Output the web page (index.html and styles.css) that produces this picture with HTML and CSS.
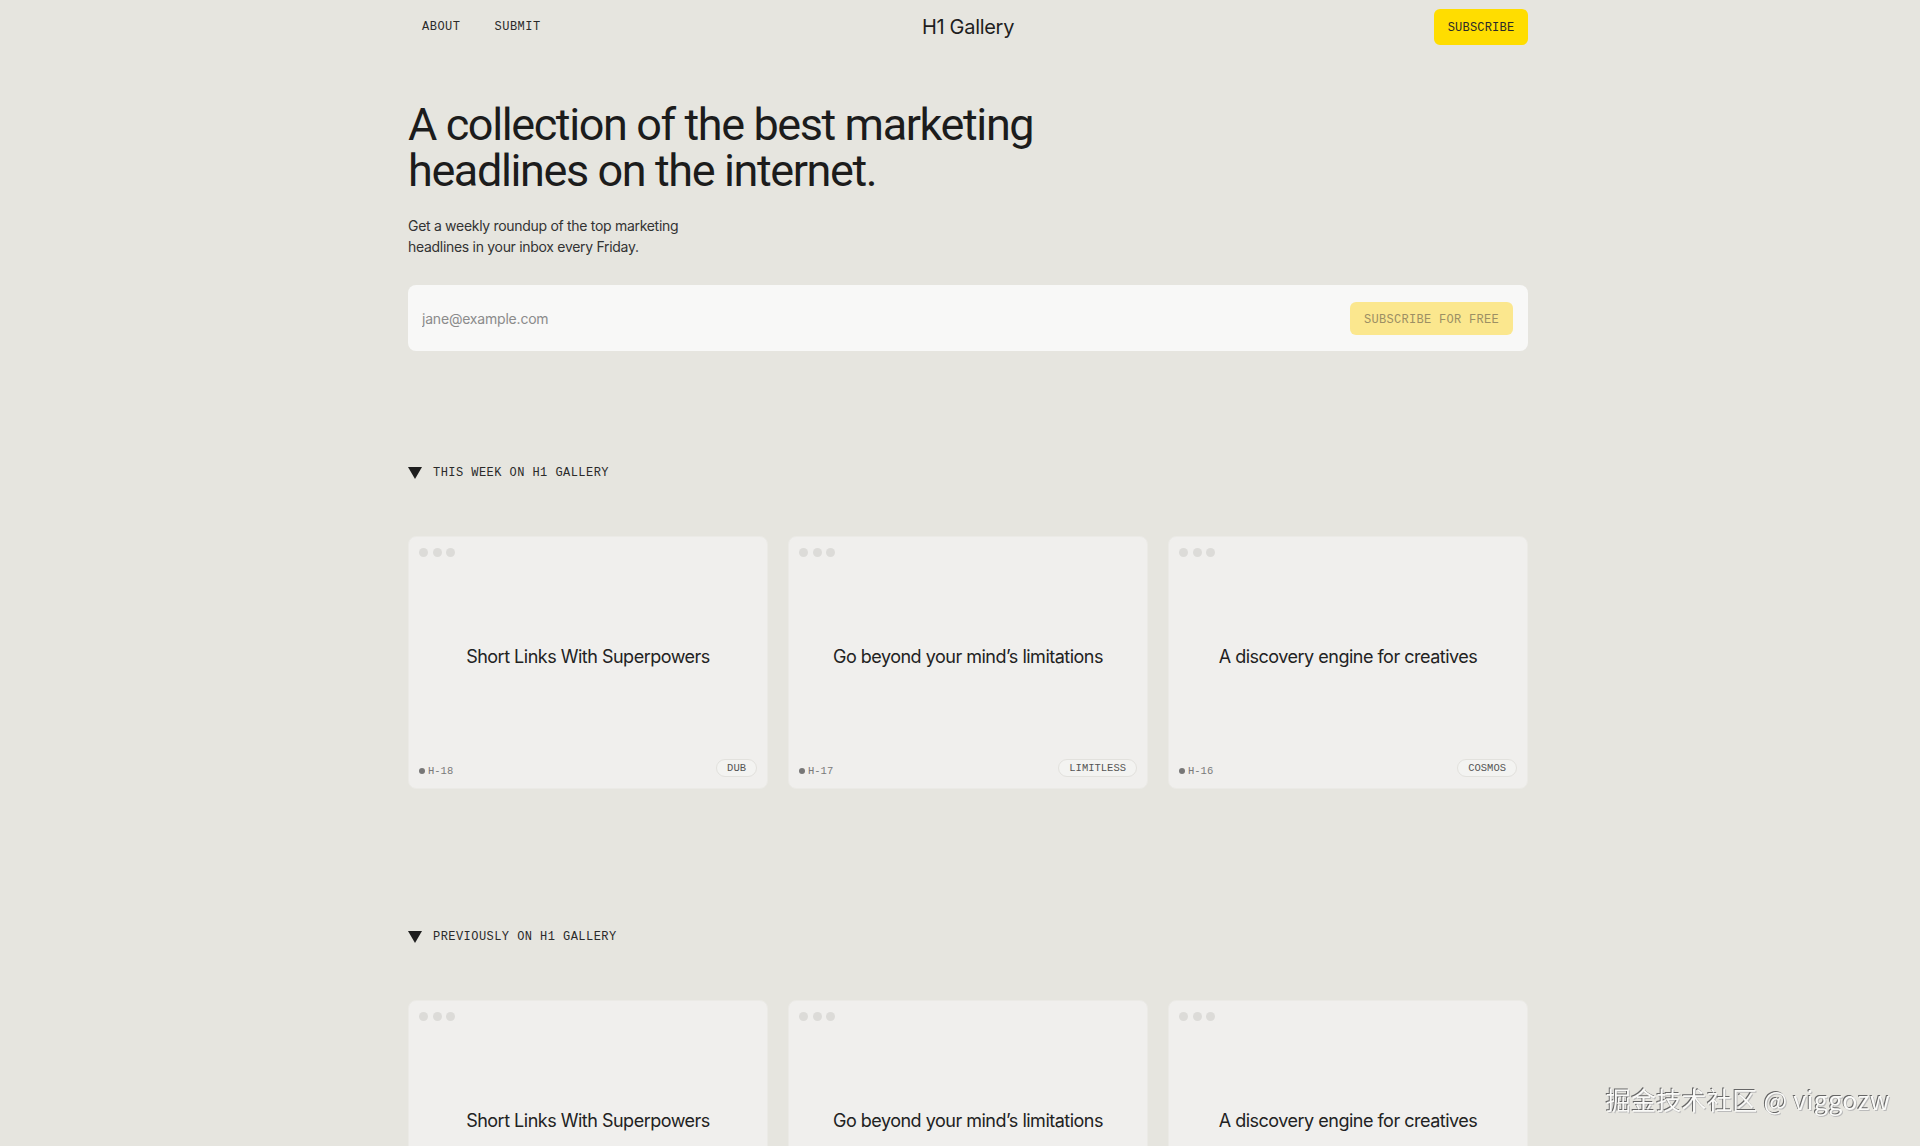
FILE: index.html
```html
<!DOCTYPE html>
<html lang="en">
<head>
<meta charset="utf-8">
<title>H1 Gallery</title>
<link rel="stylesheet" href="styles.css">
</head>
<body>
<div class="page">
  <header class="nav">
    <nav class="nav-links">
      <a href="#">ABOUT</a>
      <a href="#">SUBMIT</a>
    </nav>
    <div class="logo">H1 Gallery</div>
    <div class="nav-right"><a class="btn-sub" href="#">SUBSCRIBE</a></div>
  </header>

  <section class="hero">
    <h1>A collection of the best marketing<br>headlines on the internet.</h1>
    <p class="lead">Get a weekly roundup of the top marketing<br>headlines in your inbox every Friday.</p>
    <form class="signup">
      <input class="email" type="email" placeholder="jane@example.com">
      <button class="btn-free" type="button">SUBSCRIBE FOR FREE</button>
    </form>
  </section>

  <section class="group">
    <h2 class="group-title"><span class="tri"></span>THIS WEEK ON H1 GALLERY</h2>
    <div class="grid">
      <article class="card">
        <div class="dots"><i></i><i></i><i></i></div>
        <div class="headline">Short Links With Superpowers</div>
        <div class="card-foot"><span class="num"><b></b>H-18</span><span class="tag">DUB</span></div>
      </article>
      <article class="card">
        <div class="dots"><i></i><i></i><i></i></div>
        <div class="headline">Go beyond your mind’s limitations</div>
        <div class="card-foot"><span class="num"><b></b>H-17</span><span class="tag">LIMITLESS</span></div>
      </article>
      <article class="card">
        <div class="dots"><i></i><i></i><i></i></div>
        <div class="headline">A discovery engine for creatives</div>
        <div class="card-foot"><span class="num"><b></b>H-16</span><span class="tag">COSMOS</span></div>
      </article>
    </div>
  </section>

  <section class="group group-prev">
    <h2 class="group-title"><span class="tri"></span>PREVIOUSLY ON H1 GALLERY</h2>
    <div class="grid">
      <article class="card">
        <div class="dots"><i></i><i></i><i></i></div>
        <div class="headline">Short Links With Superpowers</div>
        <div class="card-foot"><span class="num"><b></b>H-18</span><span class="tag">DUB</span></div>
      </article>
      <article class="card">
        <div class="dots"><i></i><i></i><i></i></div>
        <div class="headline">Go beyond your mind’s limitations</div>
        <div class="card-foot"><span class="num"><b></b>H-17</span><span class="tag">LIMITLESS</span></div>
      </article>
      <article class="card">
        <div class="dots"><i></i><i></i><i></i></div>
        <div class="headline">A discovery engine for creatives</div>
        <div class="card-foot"><span class="num"><b></b>H-16</span><span class="tag">COSMOS</span></div>
      </article>
    </div>
  </section>
</div>
<div class="watermark">掘金技术社区 @ viggozw</div>
</body>
</html>
```
FILE: styles.css
```css
* { box-sizing: border-box; }
html, body { margin: 0; padding: 0; }
body {
  background: #e6e5df;
  color: #222;
  font-family: Inter, "Noto Sans", sans-serif;
  padding-left: 16px;
}
.page {
  width: 1120px;
  margin: 0 auto;
}
a { color: inherit; text-decoration: none; }

.nav {
  display: grid;
  grid-template-columns: 1fr auto 1fr;
  align-items: center;
  padding-top: 9px;
  height: 45px;
}
.nav-links {
  display: flex;
  gap: 34px;
  padding-left: 14px;
  font-family: "Liberation Mono", monospace;
  font-size: 12px;
  letter-spacing: 0.5px;
  color: #2a2a2a;
}
.logo {
  font-size: 20px;
  letter-spacing: -0.3px;
  color: #1e1e1e;
}
.nav-right { display: flex; justify-content: flex-end; }
.btn-sub {
  display: flex;
  align-items: center;
  justify-content: center;
  width: 94px;
  height: 36px;
  background: #ffdd00;
  border-radius: 6px;
  font-family: "Liberation Mono", monospace;
  font-size: 12px;
  letter-spacing: 0.2px;
  color: #2a2a2a;
  padding-top: 1px;
}

.hero { padding-top: 57px; }
.hero h1 {
  margin: 0;
  font-family: Roboto, Inter, sans-serif;
  font-size: 45px;
  line-height: 46px;
  font-weight: 400;
  letter-spacing: -1.4px;
  color: #1c1c1c;
}
.lead {
  margin: 21px 0 0;
  font-size: 14px;
  line-height: 21px;
  letter-spacing: -0.3px;
  color: #333;
}
.signup {
  margin-top: 28px;
  display: flex;
  align-items: center;
  height: 66px;
  background: #f8f8f7;
  border-radius: 8px;
  padding: 0 15px 0 14px;
}
.email {
  flex: 1;
  border: 0;
  outline: 0;
  background: transparent;
  font-family: Inter, sans-serif;
  font-size: 14px;
  letter-spacing: -0.2px;
  color: #333;
  padding: 0;
}
.email::placeholder { color: #8b8b8b; }
.btn-free {
  height: 33px;
  width: 163px;
  border: 0;
  border-radius: 6px;
  background: #fbe78e;
  color: #9c8f64;
  font-family: "Liberation Mono", monospace;
  font-size: 12px;
  letter-spacing: 0.3px;
  padding: 3px 0 0;
}

.group { padding-top: 114px; }
.group-prev { padding-top: 140px; }
.group-title {
  margin: 0;
  display: flex;
  align-items: center;
  height: 16px;
  font-family: "Liberation Mono", monospace;
  font-weight: 400;
  font-size: 12px;
  letter-spacing: 0.45px;
  color: #2a2a2a;
}
.tri {
  width: 0;
  height: 0;
  border-left: 7px solid transparent;
  border-right: 7px solid transparent;
  border-top: 12px solid #1e1e1e;
  margin-right: 11px;
}
.grid {
  margin-top: 55px;
  display: grid;
  grid-template-columns: repeat(3, 1fr);
  gap: 20px;
}
.card {
  height: 253px;
  background: #f0efed;
  border: 1px solid #ebeae6;
  border-radius: 8px;
  padding: 10px 10px 11px;
  display: flex;
  flex-direction: column;
}
.dots { display: flex; gap: 4.5px; padding-top: 1px; }
.dots i {
  width: 9px;
  height: 9px;
  border-radius: 50%;
  background: #dcdbd8;
}
.headline {
  flex: 1;
  display: flex;
  align-items: center;
  justify-content: center;
  font-size: 18px;
  letter-spacing: -0.5px;
  color: #222;
  padding-bottom: 4px;
}
.card-foot {
  display: flex;
  justify-content: space-between;
  align-items: center;
}
.num {
  display: flex;
  align-items: center;
  gap: 3px;
  font-family: "Liberation Mono", monospace;
  font-size: 10.5px;
  color: #7a7a7a;
  padding-top: 5px;
}
.num b {
  width: 6px;
  height: 6px;
  border-radius: 50%;
  background: #777;
}
.tag {
  height: 18px;
  display: flex;
  align-items: center;
  padding: 0 10px;
  border: 1px solid #e2e1dd;
  border-radius: 9px;
  background: #f3f3f1;
  font-family: "Liberation Mono", monospace;
  font-size: 10.5px;
  color: #555;
}

.watermark {
  position: fixed;
  right: 30px;
  bottom: 29px;
  font-family: "Noto Sans CJK SC", "Noto Sans", sans-serif;
  font-size: 25px;
  color: #fafaf8;
  text-shadow: -1px -1px 0 #666, 1px 1px 0 #bbb;
  letter-spacing: 0.3px;
}
```
